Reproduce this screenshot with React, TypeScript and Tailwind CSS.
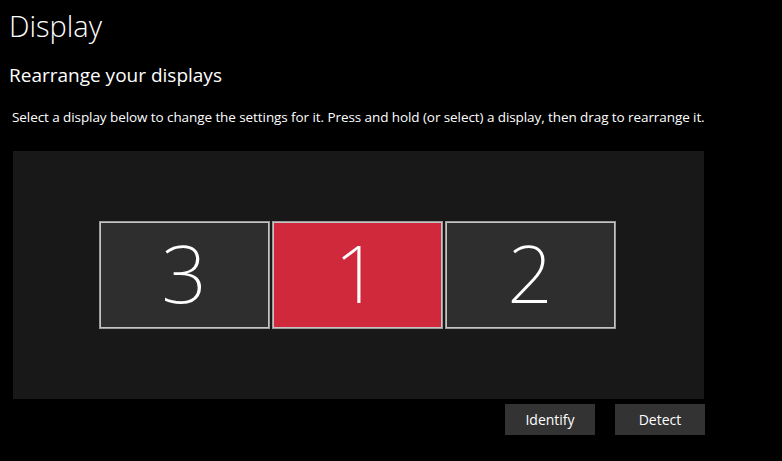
import React, { FC } from "react";

interface MonitorProps {
  num: number;
  active?: boolean;
}

const Monitor: FC<MonitorProps> = ({ num, active }) => {
  return (
    <div
      className={
        "flex h-[108px] w-[171px] items-center justify-center border-2 border-[#c4c4c4] outline outline-1 -outline-offset-1 outline-[#9a9a9a] " +
        (active ? "bg-[#d0293b]" : "bg-[#2e2e2e]")
      }
    >
      <span className="pb-[6px] font-['Noto_Sans',sans-serif] text-[80px] font-extralight leading-none text-white">
        {num}
      </span>
    </div>
  );
};

export default function App() {
  return (
    <div className="min-h-[461px] w-[782px] bg-black font-['Open_Sans','Noto_Sans',sans-serif] text-white">
      <div className="pl-[9px] pt-[6px]">
        <h1 className="text-[29px] font-light leading-[40px]">Display</h1>
        <h2 className="mt-[16px] text-[19px] leading-[26px]">Rearrange your displays</h2>
        <p className="mt-[19px] pl-[3px] text-[13.5px] leading-[20px] tracking-[-0.08px]">
          Select a display below to change the settings for it. Press and hold (or select) a display, then drag to
          rearrange it.
        </p>
      </div>

      <div className="ml-[13px] mt-[24px] flex h-[248px] w-[691px] items-center justify-center gap-[2px] bg-[#181818] pr-[3px]">
        <Monitor num={3} />
        <Monitor num={1} active />
        <Monitor num={2} />
      </div>

      <div className="mt-[5px] flex w-[705px] justify-end gap-[20px]">
        <button className="h-[31px] w-[90px] bg-[#333333] text-[14px] text-white">Identify</button>
        <button className="h-[31px] w-[90px] bg-[#333333] text-[14px] text-white">Detect</button>
      </div>
    </div>
  );
}
